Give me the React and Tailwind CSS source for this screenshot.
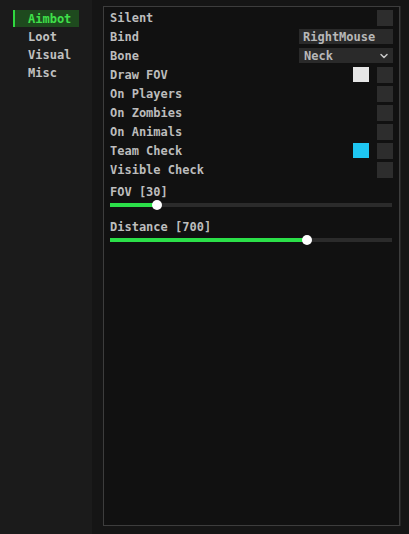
import { ChevronDown } from 'lucide-react'

const font = { fontFamily: '"DejaVu Sans Mono", "Liberation Mono", monospace' }

const tabs = ['Aimbot', 'Loot', 'Visual', 'Misc']

const rows = [
  { label: 'Silent', kind: 'check' },
  { label: 'Bind', kind: 'bind', value: 'RightMouse' },
  { label: 'Bone', kind: 'select', value: 'Neck' },
  { label: 'Draw FOV', kind: 'check', swatch: 'bg-[#e6e6e6]' },
  { label: 'On Players', kind: 'check' },
  { label: 'On Zombies', kind: 'check' },
  { label: 'On Animals', kind: 'check' },
  { label: 'Team Check', kind: 'check', swatch: 'bg-[#1ec6f2]' },
  { label: 'Visible Check', kind: 'check' },
]

const sliders = [
  { label: 'FOV [30]', pct: 16.6 },
  { label: 'Distance [700]', pct: 70 },
]

const Slider = ({ label, pct }) => (
  <div className="flex flex-col">
    <div className="h-[15px] flex items-center text-[12px] font-bold text-[#bdbdbd]">{label}</div>
    <div className="relative h-[4px] mt-[4px] bg-[#2b2b2b] mr-[1px]">
      <div className="absolute left-0 top-0 h-full bg-[#2be049]" style={{ width: `${pct}%` }} />
      <div
        className="absolute top-1/2 w-[10px] h-[10px] -translate-x-1/2 -translate-y-1/2 rounded-full bg-white"
        style={{ left: `${pct}%` }}
      />
    </div>
  </div>
)

const App = () => {
  return (
    <div className="w-[409px] h-[534px] flex bg-[#151515] overflow-hidden" style={font}>
      {/* Sidebar */}
      <div className="w-[92px] shrink-0 h-full bg-[#1b1b1b] pl-[13px] pt-[10px] flex flex-col">
        {tabs.map((t, i) =>
          i === 0 ? (
            <div key={t} className="w-[66px] h-[17px] mb-[1px] flex items-center bg-[#1e4a1e] border-l-2 border-[#2fd83f] pl-[13px] text-[12px] font-bold text-[#3fe04a]">
              {t}
            </div>
          ) : (
            <div key={t} className="h-[18px] flex items-center pl-[15px] text-[12px] font-bold text-[#c0c0c0]">
              {t}
            </div>
          )
        )}
      </div>

      {/* Main panel */}
      <div className="flex-1 pl-[11px] pt-[6px] pb-[8px]">
        <div className="w-[297px] h-full border border-[#3d3d3d] bg-[#111111] shadow-[1px_0_0_#262626] px-[6px] pt-[1px]">
          {rows.map((r) => (
            <div key={r.label} className="h-[19px] flex items-center">
              <span className="flex-1 text-[12px] font-bold text-[#bcbcbc]">{r.label}</span>
              {r.kind === 'check' && (
                <div className="flex items-center gap-[8px]">
                  {r.swatch && <div className={`w-[16px] h-[15px] ${r.swatch}`} />}
                  <div className="w-[16px] h-[16px] bg-[#2d2d2d]" />
                </div>
              )}
              {r.kind === 'bind' && (
                <div className="w-[94px] h-[15px] bg-[#2a2a2a] flex items-center pl-[4px] text-[12px] font-bold text-[#b8b8b8]">
                  {r.value}
                </div>
              )}
              {r.kind === 'select' && (
                <div className="w-[94px] h-[15px] bg-[#2a2a2a] flex items-center justify-between pl-[5px] pr-[3px] text-[12px] font-bold text-[#b8b8b8]">
                  <span>{r.value}</span>
                  <ChevronDown size={12} strokeWidth={3} className="text-[#c8c8c8]" />
                </div>
              )}
            </div>
          ))}
          <div className="flex flex-col gap-[12px] mt-[5px]">
            {sliders.map((s) => (
              <Slider key={s.label} {...s} />
            ))}
          </div>
        </div>
      </div>
    </div>
  )
}

export default App
